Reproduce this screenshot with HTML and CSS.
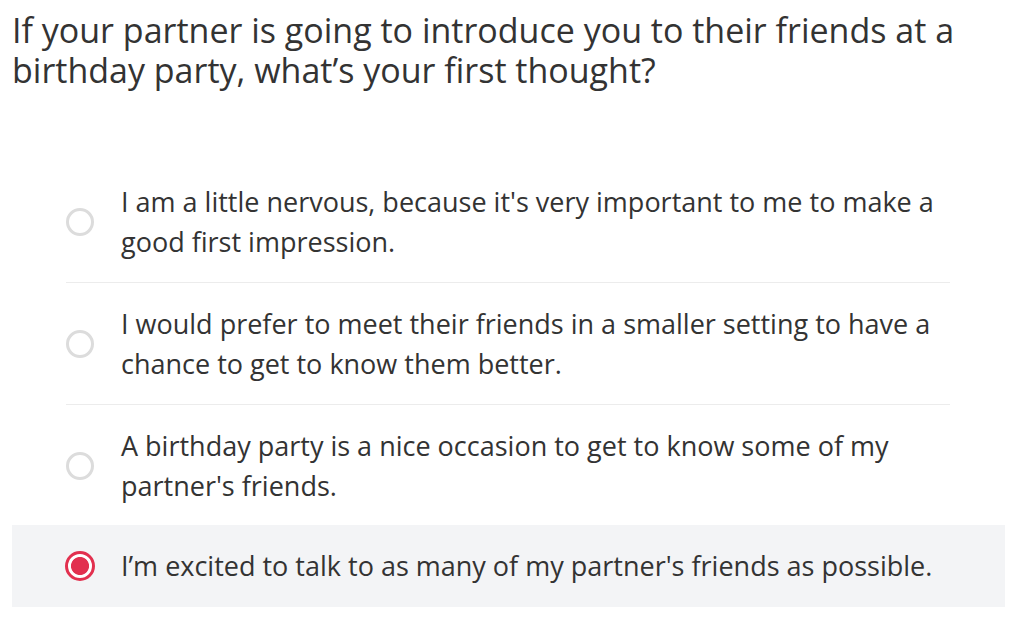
FILE: index.html
```html
<!DOCTYPE html>
<html lang="en">
<head>
<meta charset="utf-8">
<title>Question</title>
<link rel="stylesheet" href="styles.css">
</head>
<body>
<main class="quiz">
  <h1 class="question">If your partner is going to introduce you to their friends at a birthday party, what’s your first thought?</h1>
  <ul class="options">
    <li class="option">
      <div class="option-inner">
        <span class="radio"></span>
        <span class="label">I am a little nervous, because it's very important to me to make a good first impression.</span>
      </div>
    </li>
    <li class="option">
      <div class="option-inner">
        <span class="radio"></span>
        <span class="label">I would prefer to meet their friends in a smaller setting to have a chance to get to know them better.</span>
      </div>
    </li>
    <li class="option">
      <div class="option-inner">
        <span class="radio"></span>
        <span class="label">A birthday party is a nice occasion to get to know some of my partner's friends.</span>
      </div>
    </li>
    <li class="option selected">
      <div class="option-inner">
        <span class="radio"></span>
        <span class="label">I’m excited to talk to as many of my partner's friends as possible.</span>
      </div>
    </li>
  </ul>
</main>
</body>
</html>
```
FILE: styles.css
```css
html, body {
  margin: 0;
  padding: 0;
  background: #fff;
}
body {
  font-family: "Open Sans", "Liberation Sans", sans-serif;
  color: #333;
}
.quiz {
  width: 993px;
  padding: 0 0 0 12px;
}
.question {
  margin: 0;
  padding-top: 10px;
  font-size: 34px;
  font-weight: 400;
  line-height: 40px;
  color: #333;
  width: 960px;
}
.options {
  list-style: none;
  margin: 0;
  padding: 0;
  margin-top: 71px;
}
.option {
  padding: 0 55px 0 54px;
}
.option-inner {
  display: flex;
  align-items: center;
  gap: 27px;
  padding: 21px 0 20px;
  border-bottom: 1px solid #ececec;
}
.option:nth-last-child(2) .option-inner,
.option:last-child .option-inner {
  border-bottom: none;
}
.option:nth-last-child(2) .option-inner {
  padding-bottom: 19px;
}
.option:last-child .option-inner {
  padding-bottom: 21px;
}
.selected {
  background: #f3f4f6;
}
.radio {
  flex: none;
  box-sizing: border-box;
  width: 28px;
  height: 28px;
  border: 3px solid #dcdcdc;
  border-radius: 50%;
  background: #fff;
}
.selected .radio {
  width: 30px;
  height: 30px;
  margin-left: -1px;
  margin-right: -1px;
  border-color: #e2304f;
  background: radial-gradient(circle closest-side, #e2304f 8.6px, #fff 9.4px);
}
.label {
  font-size: 27px;
  line-height: 40px;
  color: #333;
}
```
